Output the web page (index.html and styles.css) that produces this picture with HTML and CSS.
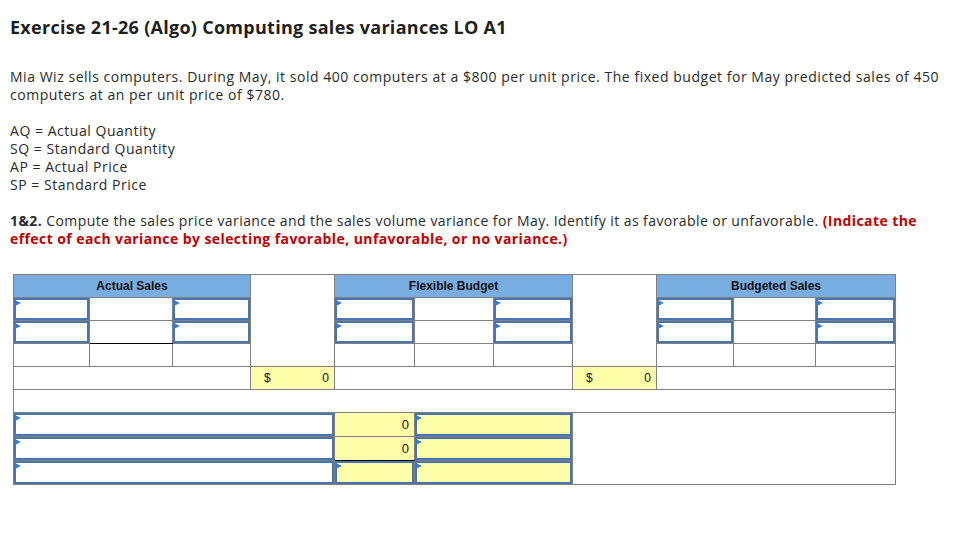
FILE: index.html
```html
<!DOCTYPE html>
<html>
<head>
<meta charset="utf-8">
<link rel="stylesheet" href="styles.css">
</head>
<body>
<div class="page">
  <h1 class="title">Exercise 21-26 (Algo) Computing sales variances LO A1</h1>
  <p class="para">Mia Wiz sells computers. During May, it sold 400 computers at a $800 per unit price. The fixed budget for May predicted sales of 450 computers at an per unit price of $780.</p>
  <p class="para">AQ = Actual Quantity<br>SQ = Standard Quantity<br>AP = Actual Price<br>SP = Standard Price</p>
  <p class="para instr"><b>1&amp;2.</b> Compute the sales price variance and the sales volume variance for May. Identify it as favorable or unfavorable. <b class="red">(Indicate the effect of each variance by selecting favorable, unfavorable, or no variance.)</b></p>

  <table class="grid">
    <colgroup>
      <col style="width:76px"><col style="width:83px"><col style="width:78px">
      <col style="width:84px">
      <col style="width:80px"><col style="width:79px"><col style="width:79px">
      <col style="width:84px">
      <col style="width:77px"><col style="width:82px"><col style="width:80px">
    </colgroup>
    <tr>
      <td class="head" colspan="3">Actual Sales</td>
      <td rowspan="4"></td>
      <td class="head" colspan="3">Flexible Budget</td>
      <td rowspan="4"></td>
      <td class="head" colspan="3">Budgeted Sales</td>
    </tr>
    <tr>
      <td class="inp"></td><td></td><td class="inp"></td>
      <td class="inp"></td><td></td><td class="inp"></td>
      <td class="inp"></td><td></td><td class="inp"></td>
    </tr>
    <tr>
      <td class="inp"></td><td class="under"></td><td class="inp"></td>
      <td class="inp"></td><td></td><td class="inp"></td>
      <td class="inp"></td><td></td><td class="inp"></td>
    </tr>
    <tr>
      <td></td><td></td><td></td>
      <td></td><td></td><td></td>
      <td></td><td></td><td></td>
    </tr>
    <tr>
      <td colspan="3"></td>
      <td class="yel"><div class="money"><span>$</span><span>0</span></div></td>
      <td colspan="3"></td>
      <td class="yel"><div class="money"><span>$</span><span>0</span></div></td>
      <td colspan="3"></td>
    </tr>
    <tr>
      <td colspan="11"></td>
    </tr>
    <tr class="tall">
      <td class="inp" colspan="4"></td>
      <td class="yel num">0</td>
      <td class="inp yel" colspan="2"></td>
      <td rowspan="3" colspan="4"></td>
    </tr>
    <tr class="tall">
      <td class="inp" colspan="4"></td>
      <td class="yel num under">0</td>
      <td class="inp yel" colspan="2"></td>
    </tr>
    <tr class="tall">
      <td class="inp" colspan="4"></td>
      <td class="inp yel"></td>
      <td class="inp yel" colspan="2"></td>
    </tr>
  </table>
</div>
</body>
</html>
```

FILE: styles.css
```css
body {
  margin: 0;
  background: #ffffff;
  font-family: "Open Sans", Lato, sans-serif;
  color: #2b2b2b;
}

.page {
  padding: 16px 10px;
}

.title {
  margin: 0 0 30px 0;
  font-size: 18px;
  line-height: 22px;
  font-weight: 700;
  letter-spacing: 0.28px;
  color: #1f1f1f;
}

.para {
  margin: 0 0 18px 0;
  font-size: 14px;
  line-height: 18px;
  letter-spacing: 0.53px;
}

.para.instr {
  letter-spacing: 0.42px;
}

.para b {
  font-weight: 700;
}

.red {
  color: #c00000;
}

.grid {
  margin: 26px 0 0 3px;
  border-collapse: collapse;
  table-layout: fixed;
  width: 882px;
  font-family: "Liberation Sans", Arial, sans-serif;
  font-size: 12px;
  color: #111;
  letter-spacing: 0;
}

.grid td {
  border: 1px solid #808080;
  height: 22px;
  padding: 0;
  position: relative;
  background: #ffffff;
}

.grid tr.tall td {
  height: 23px;
}

.grid td.head {
  background: #78ade2;
  font-weight: 700;
  text-align: center;
  color: #111;
}

.grid td.yel {
  background: #ffffaa;
}

.grid td.inp {
  box-shadow: inset 0 0 0 2px #4a74ae;
}

.grid td.inp::before {
  content: "";
  position: absolute;
  left: 1px;
  top: 2px;
  border-left: 6px solid #3d7cc9;
  border-top: 3px solid transparent;
  border-bottom: 3px solid transparent;
}

.grid td.under {
  border-bottom: 1px solid #000;
}

.money {
  display: flex;
  justify-content: space-between;
  padding: 0 5px 0 13px;
}

.grid td.num {
  text-align: right;
  padding-right: 5px;
  font-size: 13px;
}
```
